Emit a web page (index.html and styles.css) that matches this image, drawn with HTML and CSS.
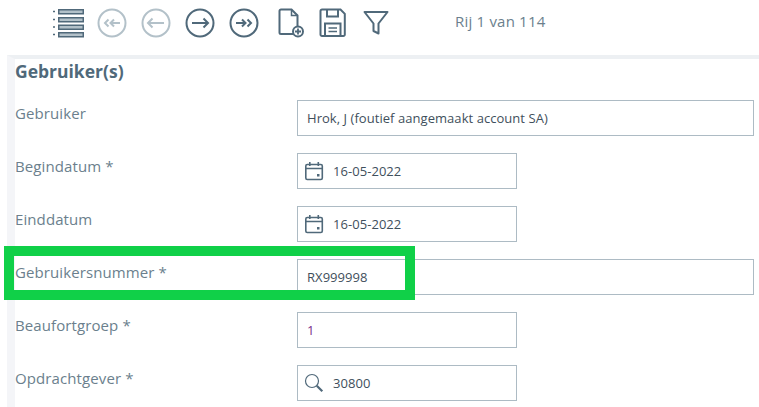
FILE: index.html
```html
<!DOCTYPE html>
<html lang="nl">
<head>
  <meta charset="UTF-8" />
  <meta name="viewport" content="width=device-width, initial-scale=1.0"/>
  <title>Gebruiker(s)</title>
  <link rel="stylesheet" href="styles.css">
</head>
<body>

<div class="toolbar">
  <div class="tools">
    <svg class="icon list" width="32" height="30" viewBox="0 0 32 30">
      <rect x="6.75" y="1.75" width="24.5" height="4" fill="#b3c1c9" stroke="#50697a" stroke-width="1.5"/>
      <rect x="6.75" y="9.75" width="24.5" height="4" fill="#b3c1c9" stroke="#50697a" stroke-width="1.5"/>
      <rect x="6.75" y="17.25" width="24.5" height="4" fill="#b3c1c9" stroke="#50697a" stroke-width="1.5"/>
      <rect x="6.75" y="24.75" width="24.5" height="4" fill="#b3c1c9" stroke="#50697a" stroke-width="1.5"/>
      <path d="M1 3.5h2M1 11.5h2M1 19h2M1 26.5h2" stroke="#50697a" stroke-width="1.5" fill="none"/>
    </svg>
    <svg class="icon first" width="30" height="30" viewBox="0 0 30 30" fill="none" stroke="#b3c1c9" stroke-width="2">
      <circle cx="15" cy="15" r="13.5"/>
      <path d="M14 15h9M17 11.5l-3.5 3.5 3.5 3.5M11.5 11.5l-3.5 3.5 3.5 3.5"/>
    </svg>
    <svg class="icon prev" width="30" height="30" viewBox="0 0 30 30" fill="none" stroke="#b3c1c9" stroke-width="2">
      <circle cx="15" cy="15" r="13.5"/>
      <path d="M7 15h16M11.5 10.5l-4.5 4.5 4.5 4.5"/>
    </svg>
    <svg class="icon next" width="30" height="30" viewBox="0 0 30 30" fill="none" stroke="#50697a" stroke-width="2">
      <circle cx="15" cy="15" r="13.5"/>
      <path d="M7 15h16M18.5 10.5l4.5 4.5-4.500 4.500"/>
    </svg>
    <svg class="icon last" width="30" height="30" viewBox="0 0 30 30" fill="none" stroke="#50697a" stroke-width="2">
      <circle cx="15" cy="15" r="13.5"/>
      <path d="M7 15h9M13 11.500l3.500 3.500-3.500 3.500M18.500 11.500l3.500 3.500-3.500 3.500"/>
    </svg>
    <svg class="icon new" width="26" height="30" viewBox="0 0 26 30" fill="none" stroke="#50697a" stroke-width="2">
      <path d="M15 26H3a1.500 1.500 0 0 1-1.500-1.500V3A1.500 1.500 0 0 1 3 1.500h10.500L19.500 7.500V18"/>
      <path d="M13.500 1.500V7.500H19.500" stroke-width="1.500"/>
      <circle cx="20" cy="23.500" r="5"/>
      <path d="M17 23.500h6M20 20.500v6" stroke-width="1.800"/>
    </svg>
    <svg class="icon save" width="27" height="30" viewBox="0 0 27 30" fill="none" stroke="#50697a" stroke-width="2">
      <path d="M3 1.500H21.500L25.800 5.800V26.500a1.500 1.500 0 0 1-1.500 1.500H3a1.500 1.500 0 0 1-1.500-1.500V3A1.500 1.500 0 0 1 3 1.500z"/>
      <path d="M8 1.500V8.500H19V1.500"/>
      <rect x="6" y="15.500" width="15.500" height="12.500"/>
      <path d="M9.500 20h8.500M9.500 23.500h8.500" stroke-width="1.500"/>
    </svg>
    <svg class="icon filter" width="26" height="26" viewBox="0 0 26 26" fill="none" stroke="#50697a" stroke-width="2">
      <path d="M1.500 2h23L15.500 13.500V23.500L10.500 21V13.500z" stroke-linejoin="round"/>
    </svg>
  </div>
  <span class="row-count">Rij 1 van 114</span>
</div>

<div class="panel">
  <h2>Gebruiker(s)</h2>

  <div class="field">
    <label>Gebruiker</label>
    <div class="input wide">Hrok, J (foutief aangemaakt account SA)</div>
  </div>

  <div class="field">
    <label>Begindatum *</label>
    <div class="input short with-icon">
      <svg width="20" height="20" viewBox="0 0 20 20" fill="none" stroke="#50697a" stroke-width="1.600">
        <rect x="1.800" y="3.500" width="16.500" height="15" rx="1.500"/>
        <path d="M1.800 7.500h16.500M5.800 1v4M14.300 1v4"/>
        <rect x="13" y="13" width="2.500" height="2.500" fill="#50697a" stroke="none"/>
      </svg>
      16-05-2022
    </div>
  </div>

  <div class="field">
    <label>Einddatum</label>
    <div class="input short with-icon">
      <svg width="20" height="20" viewBox="0 0 20 20" fill="none" stroke="#50697a" stroke-width="1.600">
        <rect x="1.800" y="3.500" width="16.500" height="15" rx="1.500"/>
        <path d="M1.800 7.500h16.500M5.800 1v4M14.300 1v4"/>
        <rect x="13" y="13" width="2.500" height="2.500" fill="#50697a" stroke="none"/>
      </svg>
      16-05-2022
    </div>
  </div>

  <div class="field">
    <label>Gebruikersnummer *</label>
    <div class="input wide">RX999998</div>
  </div>

  <div class="field">
    <label>Beaufortgroep *</label>
    <div class="input short code">1</div>
  </div>

  <div class="field">
    <label>Opdrachtgever *</label>
    <div class="input short with-icon">
      <svg width="20" height="20" viewBox="0 0 20 20" fill="none" stroke="#50697a">
        <circle cx="8" cy="8" r="6.500" stroke-width="1.200"/>
        <path d="M12.800 12.800l5.500 5.500" stroke-width="2.200"/>
      </svg>
      30800
    </div>
  </div>

  <div class="highlight"></div>
</div>

</body>
</html>
```

FILE: styles.css
```css
html, body {
  margin: 0;
  padding: 0;
  height: 407px;
  overflow: hidden;
  background: #fff;
}
body {
  font-family: "Open Sans", sans-serif;
  color: #50697a;
}
.toolbar {
  display: flex;
  align-items: center;
  height: 55px;
  padding: 0 0 10px 52px;
  box-sizing: border-box;
}
.tools {
  display: flex;
  align-items: center;
  width: 403px;
}
.icon {
  display: block;
  flex: none;
}
.list { margin-right: 13px; }
.first { margin-right: 14px; }
.prev { margin-right: 14px; }
.next { margin-right: 14px; }
.last { margin-right: 19px; }
.new { margin-right: 15px; }
.save { margin-right: 17px; }
.row-count {
  margin-bottom: 3px;
  font-size: 15px;
  letter-spacing: 0.2px;
  color: #6b7f8d;
}
.panel {
  position: relative;
  margin-left: 7px;
  height: 352px;
  border-top: 4px solid #edf0f3;
  border-left: 8px solid #f4f5f8;
  box-sizing: border-box;
}
h2 {
  margin: 0;
  height: 41px;
  font-size: 17.5px;
  line-height: 24px;
  font-weight: 700;
  color: #50697a;
}
.field {
  display: flex;
  align-items: flex-start;
  height: 53px;
}
label {
  width: 282px;
  font-size: 15px;
  line-height: 27px;
  color: #6b7f8d;
  letter-spacing: 0.1px;
}
.input {
  display: flex;
  align-items: center;
  height: 36px;
  padding-left: 9px;
  border: 1px solid #adbbc4;
  box-sizing: border-box;
  font-size: 13px;
  letter-spacing: 0.05px;
  color: #3f4f5c;
  background: #fff;
}
.wide { width: 457px; }
.short { width: 220px; }
.with-icon { padding-left: 6px; }
.with-icon svg {
  flex: none;
  margin-right: 9px;
}
.code { color: #7b2d8b; }
.highlight {
  position: absolute;
  left: -11px;
  top: 187px;
  width: 411px;
  height: 54px;
  border: 10px solid #10d048;
  box-sizing: border-box;
}
```
